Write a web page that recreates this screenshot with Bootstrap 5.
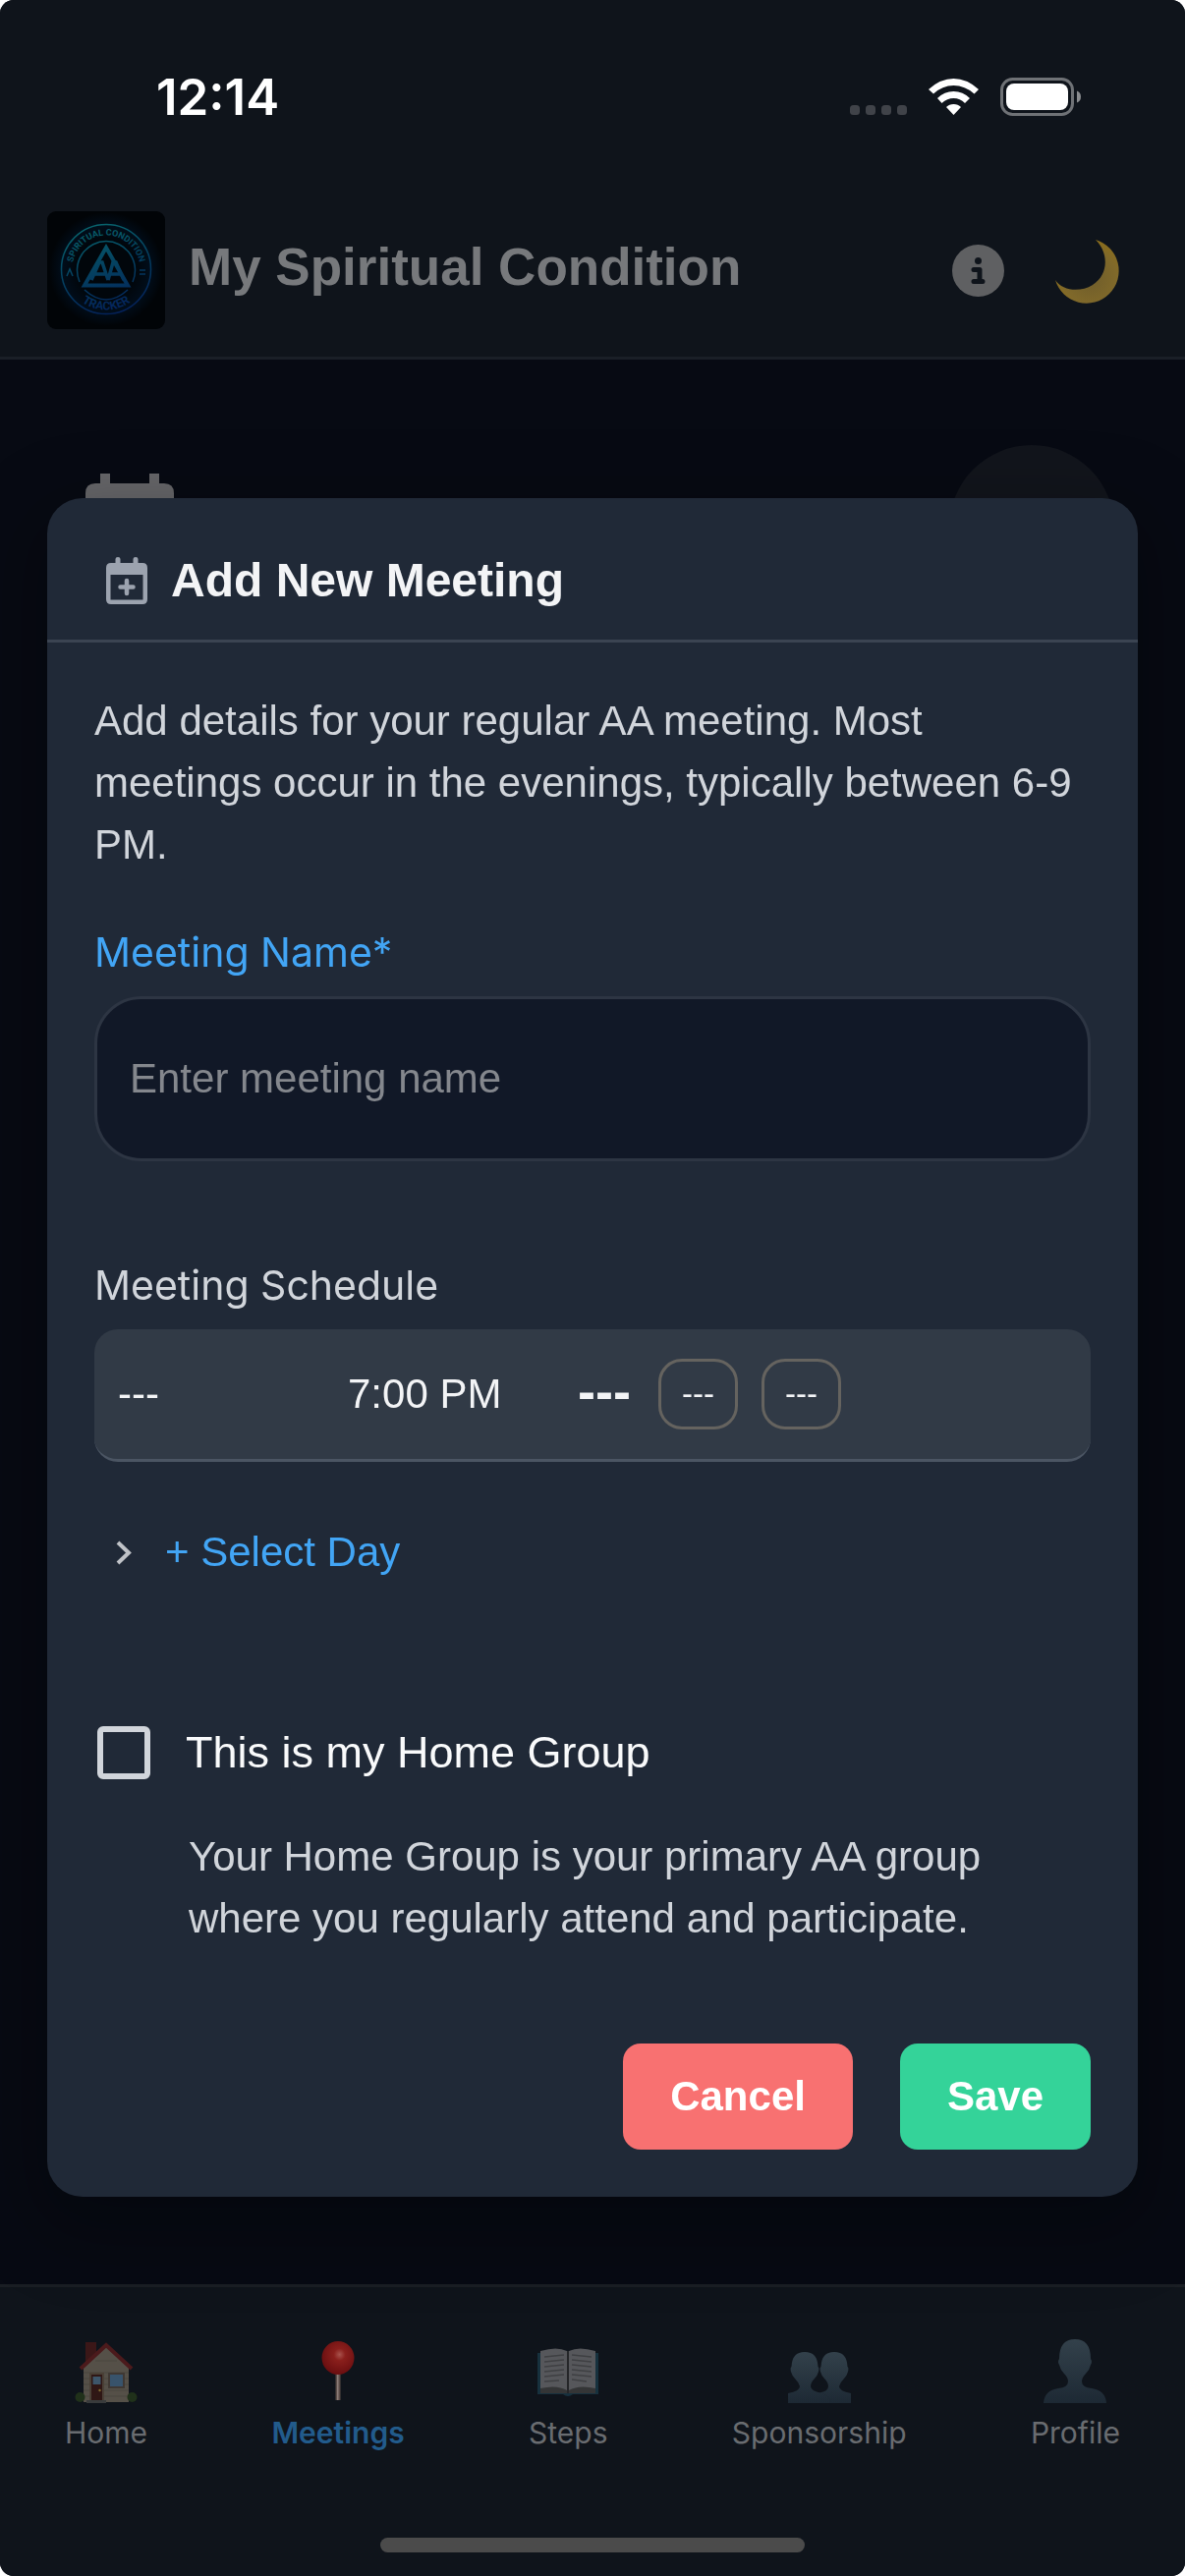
<!DOCTYPE html>
<html lang="en">
<head>
<meta charset="utf-8">
<meta name="viewport" content="width=device-width, initial-scale=1">
<title>My Spiritual Condition</title>
<link href="https://cdn.jsdelivr.net/npm/bootstrap@5.3.0/dist/css/bootstrap.min.css" rel="stylesheet">
<style>
  :root { --ui: Inter, Roboto, sans-serif; --page: "Liberation Sans", Arial, sans-serif; }
  html { background: #fff; }
  body { background: transparent; font-family: var(--page); font-size: 42px; line-height: 63px; }
  svg { display: block; flex: none; }
  .app { background: #070a13; border-radius: 14px; overflow: hidden; }
  .bar { background: #0f141b; }
  .statusbar { height: 177px; padding: 20px 106px 0 159px; }
  .clock { font: 600 51px/60px var(--ui); color: #fff; }
  .app-header { padding: 38px 66px 28px 48px; border-bottom: 3px solid #1a1f27; }
  .app-title { font-size: 53px; line-height: 60px; font-weight: 700; color: #77797c; margin-bottom: 6px; }
  .plain { background: none; border: 0; padding: 0; }
  .page-head { padding: 87px 72px 0 87px; }
  .add-circle { width: 168px; height: 168px; background: #12151c; border: 0; }
  .overlay { padding: 120px 48px 0; }
  .sheet { background: #202937; border-radius: 36px; box-shadow: 0 24px 72px 18px rgba(0,0,0,.25); color: #d1d5db; }
  .sheet-head { padding: 60px 60px 36px; border-bottom: 3px solid #3b4452; gap: 24px; }
  .sheet-title { font-size: 48px; line-height: 48px; font-weight: 700; color: #f3f4f6; }
  .sheet-body { padding: 48px; }
  .field-label { display: block; font-family: var(--ui); font-size: 41px; line-height: 60px; margin-bottom: 15px; }
  .azure { color: #42a5f5; }
  .name-field { height: 168px; padding: 0 33px; border: 3px solid #2d3543; border-radius: 48px; background: #111827; color: #f3f4f6; font-size: 42px; }
  .name-field::placeholder { color: #84878d; }
  .name-field:focus { background: #111827; color: #f3f4f6; border-color: #42a5f5; box-shadow: none; }
  .slot { height: 135px; padding: 0 24px; background: #313a46; border-bottom: 3px solid #4b5563; border-radius: 24px; color: #f3f4f6; margin-bottom: 48px; }
  .slot-col { width: 234px; }
  .slot-type { font-size: 54px; line-height: 60px; font-weight: 700; padding: 0 4px 6px 0; }
  .chip { height: 72px; padding: 0 21px; border: 3px solid #65635f; border-radius: 24px; font-size: 33px; line-height: 66px; }
  .day-btn { font-size: 42px; line-height: 88px; gap: 33px; padding: 0 21px; }
  .home-row { margin-top: 130px; padding-left: 3px; gap: 36px; }
  .home-check.form-check-input { width: 54px; height: 54px; border: 6px solid #d1d5db; border-radius: 6px; background: transparent; margin: 0; }
  .home-check.form-check-input:checked { background: #42a5f5; border-color: #42a5f5; }
  .home-label { font-size: 45px; line-height: 60px; color: #f9fafb; }
  .home-help { margin: 44px 0 96px; padding-left: 96px; }
  .action { padding: 0 48px; height: 108px; border: 0; border-radius: 18px; font-size: 42px; font-weight: 700; color: #fff; }
  .action-cancel { background: #f87171; }
  .action-save { background: #34d399; }
  .tabs { padding: 51px 66px 0; height: 297px; border-top: 3px solid #1a1e24; }
  .tab { font: 400 30px/42px var(--ui); color: #696c70; text-decoration: none; gap: 6px; }
  .tab.active { color: #225b8b; font-weight: 600; }
  .homebar { width: 432px; height: 15px; border-radius: 8px; background: #4b4b4b; }
</style>
</head>
<body>
<div class="app min-vh-100 d-flex flex-column">
  <div class="bar statusbar d-flex align-items-center justify-content-between">
    <span class="clock">12:14</span>
    <svg width="236" height="40" viewBox="0 0 236 40" aria-label="Wi-Fi and battery">
      <g fill="#404349"><rect x="1" y="28" width="10" height="10" rx="3.5"/><rect x="17" y="28" width="10" height="10" rx="3.5"/><rect x="33" y="28" width="10" height="10" rx="3.5"/><rect x="49" y="28" width="10" height="10" rx="3.5"/></g>
      <g fill="#fff"><path d="M81 12Q93 1 106.500 1T132 12L127.500 16.500Q118 8 106.500 8T86 16.500Z"/><path d="M90 21Q97 14 106.500 14T123 21L118 26Q113 21 106.500 21T94.500 26Z"/><path d="M99 30Q102 27 106.500 27T114 30L106.500 38Z"/></g>
      <rect x="155.500" y="1.500" width="72" height="36" rx="11" fill="none" stroke="#6f7276" stroke-width="3"/>
      <rect x="160" y="6" width="63" height="27" rx="8" fill="#fff"/>
      <path d="M232 13.500Q236 15 236 19.500T232 25.500Z" fill="#8a8c8f"/>
    </svg>
  </div>
  <header class="bar app-header d-flex align-items-center">
    <svg width="120" height="120" viewBox="0 0 120 120" role="img" aria-label="Spiritual Condition Tracker logo">
      <defs>
        <linearGradient id="lg" gradientUnits="userSpaceOnUse" x1="40" y1="12" x2="70" y2="106"><stop offset="0" stop-color="#08676e"/><stop offset=".5" stop-color="#044060"/><stop offset="1" stop-color="#04205a"/></linearGradient>
        <radialGradient id="glow"><stop offset=".5" stop-color="#01060b"/><stop offset=".77" stop-color="#010d1a"/><stop offset="1" stop-color="#010407"/></radialGradient>
        <path id="arcTop" d="M25.500 59A34.500 34.500 0 0 1 94.500 59"/>
        <path id="arcBottom" d="M18.500 59A41.500 41.500 0 0 0 101.500 59"/>
      </defs>
      <rect width="120" height="120" rx="9" fill="#010407"/>
      <circle cx="60" cy="59" r="58" fill="url(#glow)"/>
      <g fill="none" stroke="url(#lg)" stroke-width="1.500">
        <circle cx="60" cy="59" r="45.500"/>
        <path d="M33 72A29.500 29.500 0 1 1 87 72M38 80Q60 100 82 80"/>
        <path stroke-width="4" d="M60 37L38 75.500H82Z"/>
        <path stroke-width="3.500" d="M45 70L53 52H56L62 70M49 64H59M62 70L67 52H70L78 70M64 64H75"/>
        <path d="M20 66L23 59L26 66M94 60H100M94 64H100"/>
      </g>
      <g fill="url(#lg)" font-family="Roboto, sans-serif" font-weight="700" text-anchor="middle">
        <text font-size="9"><textPath href="#arcTop" startOffset="50%">SPIRITUAL CONDITION</textPath></text>
        <text font-size="12"><textPath href="#arcBottom" startOffset="50%">TRACKER</textPath></text>
      </g>
    </svg>
    <h1 class="app-title flex-grow-1 ms-4">My Spiritual Condition</h1>
    <button class="plain" type="button" aria-label="About">
      <svg width="53" height="53" viewBox="0 0 53 53"><circle cx="26.500" cy="26.500" r="26.500" fill="#5f6062"/><circle cx="26.500" cy="16.500" r="3.500" fill="#0f141b"/><path d="M22 25.500H28V37.500M22 37.500H31" fill="none" stroke="#0f141b" stroke-width="5" stroke-linecap="round" stroke-linejoin="round"/></svg>
    </button>
    <button class="plain ms-5" type="button" aria-label="Dark theme">
      <svg width="70" height="67" viewBox="0 0 70 67"><defs><radialGradient id="mg" cx=".55" cy=".6" r=".6"><stop offset="0" stop-color="#6e5c2b"/><stop offset=".7" stop-color="#80692a"/><stop offset="1" stop-color="#8a6d1c"/></radialGradient></defs><path d="M45 2A33 33 0 1 1 4 43C11 54 29 56 42 48C58 38 59 16 45 2Z" fill="url(#mg)"/></svg>
    </button>
  </header>
  <main class="page-head flex-grow-1 d-flex justify-content-between align-items-start">
    <svg class="mt-4" width="90" height="100" viewBox="0 0 90 100" aria-hidden="true"><path d="M15 5H25V15H65V5H75V15H80Q90 15 90 25V100H0V25Q0 15 10 15H15Z" fill="#67676a"/></svg>
    <button class="add-circle rounded-circle" type="button" aria-label="Add meeting"></button>
  </main>
  <nav class="bar tabs d-flex flex-column justify-content-between">
    <div class="d-flex justify-content-between">
      <a class="tab d-flex flex-column align-items-center" href="#home">
        <svg width="66" height="70" viewBox="0 0 66 70"><path d="M12 5H23V20L12 28Z" fill="#3b1718"/><path d="M10 29L33 9L56 29V66H10Z" fill="#555048"/><path d="M7 32L33 8L59 32" fill="none" stroke="#4b1a1c" stroke-width="4"/><path d="M10 36H56M10 42H56M10 48H56M10 54H56M10 60H56M22 24H44" stroke="#4a463f" stroke-width="1"/><path d="M16 36H31V64H16Z" fill="#4a4036"/><path d="M18 38H29V64H18Z" fill="#2f1715"/><path d="M19.500 40H27.500V48H19.500Z" fill="#3d566a"/><path d="M35 36H52V52H35Z" fill="#3f3833"/><path d="M37 38H50V50H37Z" fill="#38536b"/><circle cx="26.500" cy="54" r="1.200" fill="#806b30"/><path d="M13 64H33V67H13Z" fill="#393b3c"/><circle cx="6.500" cy="61" r="5" fill="#20311a"/><circle cx="59.500" cy="61" r="5" fill="#20311a"/></svg>
        Home</a>
      <a class="tab active d-flex flex-column align-items-center" href="#meetings">
        <svg width="66" height="70" viewBox="0 0 66 70"><defs><radialGradient id="pin" cx=".55" cy=".4" r=".6"><stop offset="0" stop-color="#a8524c"/><stop offset=".3" stop-color="#8a1f1c"/><stop offset="1" stop-color="#6a0e10"/></radialGradient></defs><path d="M30.500 34H35.500V64H30.500Z" fill="#5b4c48"/><path d="M32 34H33.500V64H32Z" fill="#8b7d78"/><ellipse cx="33" cy="21" rx="16.500" ry="17" fill="url(#pin)"/></svg>
        Meetings</a>
      <a class="tab d-flex flex-column align-items-center" href="#steps">
        <svg width="66" height="70" viewBox="0 0 66 70"><path d="M2 16H64V58H38Q33 62 28 58H2Z" fill="#17313e"/><path d="M5 14Q22 9 32 14V56H5ZM61 14Q44 9 34 14V56H61Z" fill="#56575b"/><path d="M5 52Q22 48 32 54V57H5ZM61 52Q44 48 34 54V57H61Z" fill="#343536"/><path d="M32 14H34V57H32Z" fill="#252629"/><path d="M9 20L29 18M9 25L29 23M9 30L29 28M9 35L29 33M9 40L29 38M9 45L24 44M37 18L57 20M37 23L57 25M37 28L57 30M37 33L57 35M37 38L57 40M37 43L52 45" stroke="#3f4043" stroke-width="1.300"/></svg>
        Steps</a>
      <a class="tab d-flex flex-column align-items-center" href="#sponsorship">
        <svg width="66" height="70" viewBox="0 0 66 70"><defs><linearGradient id="pg" x1="0" y1="0" x2="0" y2="1"><stop offset="0" stop-color="#33414b"/><stop offset="1" stop-color="#1d2934"/></linearGradient></defs><path d="M1 67V57Q13 55 13 50Q12 46 8 42Q5 39 4 35Q3 31 4.500 30Q5 15 18 15T31.500 30Q33 31 32 35Q31 39 28 42Q24 46 24 50Q24 55 36 57Q44 60 44 67Z" fill="url(#pg)"/><path d="M65 67V57Q53 55 53 50Q54 46 58 42Q61 39 62 35Q63 31 61.500 30Q61 15 48 15T34.500 30Q33 31 34 35Q35 39 38 42Q42 46 42 50Q42 55 33 56.500Q44 59 44 67Z" fill="url(#pg)"/></svg>
        Sponsorship</a>
      <a class="tab d-flex flex-column align-items-center" href="#profile">
        <svg width="66" height="70" viewBox="0 0 66 70"><path d="M1 67Q2 54 16 52Q26 51 26 45Q26 41 22 37Q18 33 17 28Q15 25 17 22Q17 2 33 2T49 22Q51 25 49 28Q48 33 44 37Q40 41 40 45Q40 51 50 52Q64 54 65 67Z" fill="url(#pg)"/></svg>
        Profile</a>
    </div>
    <div class="homebar align-self-center mb-4"></div>
  </nav>
</div>

<div class="overlay position-fixed top-0 start-0 w-100 h-100 d-flex align-items-center">
  <form class="sheet w-100" role="dialog" aria-labelledby="sheetTitle">
    <div class="sheet-head d-flex align-items-center">
      <svg width="42" height="48" viewBox="0 0 42 48" aria-hidden="true"><path fill="#9ca3af" fill-rule="evenodd" d="M5 6H9.500V2Q9.500 0 12 0T14.500 2V6H27.500V2Q27.500 0 30 0T32.500 2V6H37Q42 6 42 11V43Q42 48 37 48H5Q0 48 0 43V11Q0 6 5 6ZM4.500 18V43.500H37.500V18Z"/><path d="M21 24V37M14.500 30.500H27.500" stroke="#9ca3af" stroke-width="4.500" stroke-linecap="round"/></svg>
      <h2 class="sheet-title mb-0" id="sheetTitle">Add New Meeting</h2>
    </div>
    <div class="sheet-body">
      <p class="mb-5">Add details for your regular AA meeting. Most meetings occur in the evenings, typically between 6-9 PM.</p>
      <label class="field-label azure" for="meetingName">Meeting Name*</label>
      <input class="form-control name-field" id="meetingName" type="text" placeholder="Enter meeting name">
      <div class="field-label mt-5 pt-5">Meeting Schedule</div>
      <div class="slot d-flex align-items-center">
        <span class="slot-col">---</span>
        <span class="slot-col">7:00 PM</span>
        <span class="d-flex align-items-center gap-4"><span class="slot-type">---</span><span class="chip">---</span><span class="chip">---</span></span>
      </div>
      <button class="plain day-btn azure d-flex align-items-center" type="button">
        <svg width="18" height="26" viewBox="0 0 18 26" aria-hidden="true"><path d="M3 3L14 13.500L3 24" fill="none" stroke="#c0c3c8" stroke-width="4"/></svg>
        + Select Day</button>
      <div class="home-row d-flex align-items-center">
        <input class="form-check-input home-check" id="homeGroup" type="checkbox">
        <label class="home-label" for="homeGroup">This is my Home Group</label>
      </div>
      <p class="home-help">Your Home Group is your primary AA group where you regularly attend and participate.</p>
      <div class="d-flex justify-content-end gap-5">
        <button class="action action-cancel" type="button">Cancel</button>
        <button class="action action-save" type="submit">Save</button>
      </div>
    </div>
  </form>
</div>
<script src="https://cdn.jsdelivr.net/npm/bootstrap@5.3.0/dist/js/bootstrap.bundle.min.js"></script>
</body>
</html>
